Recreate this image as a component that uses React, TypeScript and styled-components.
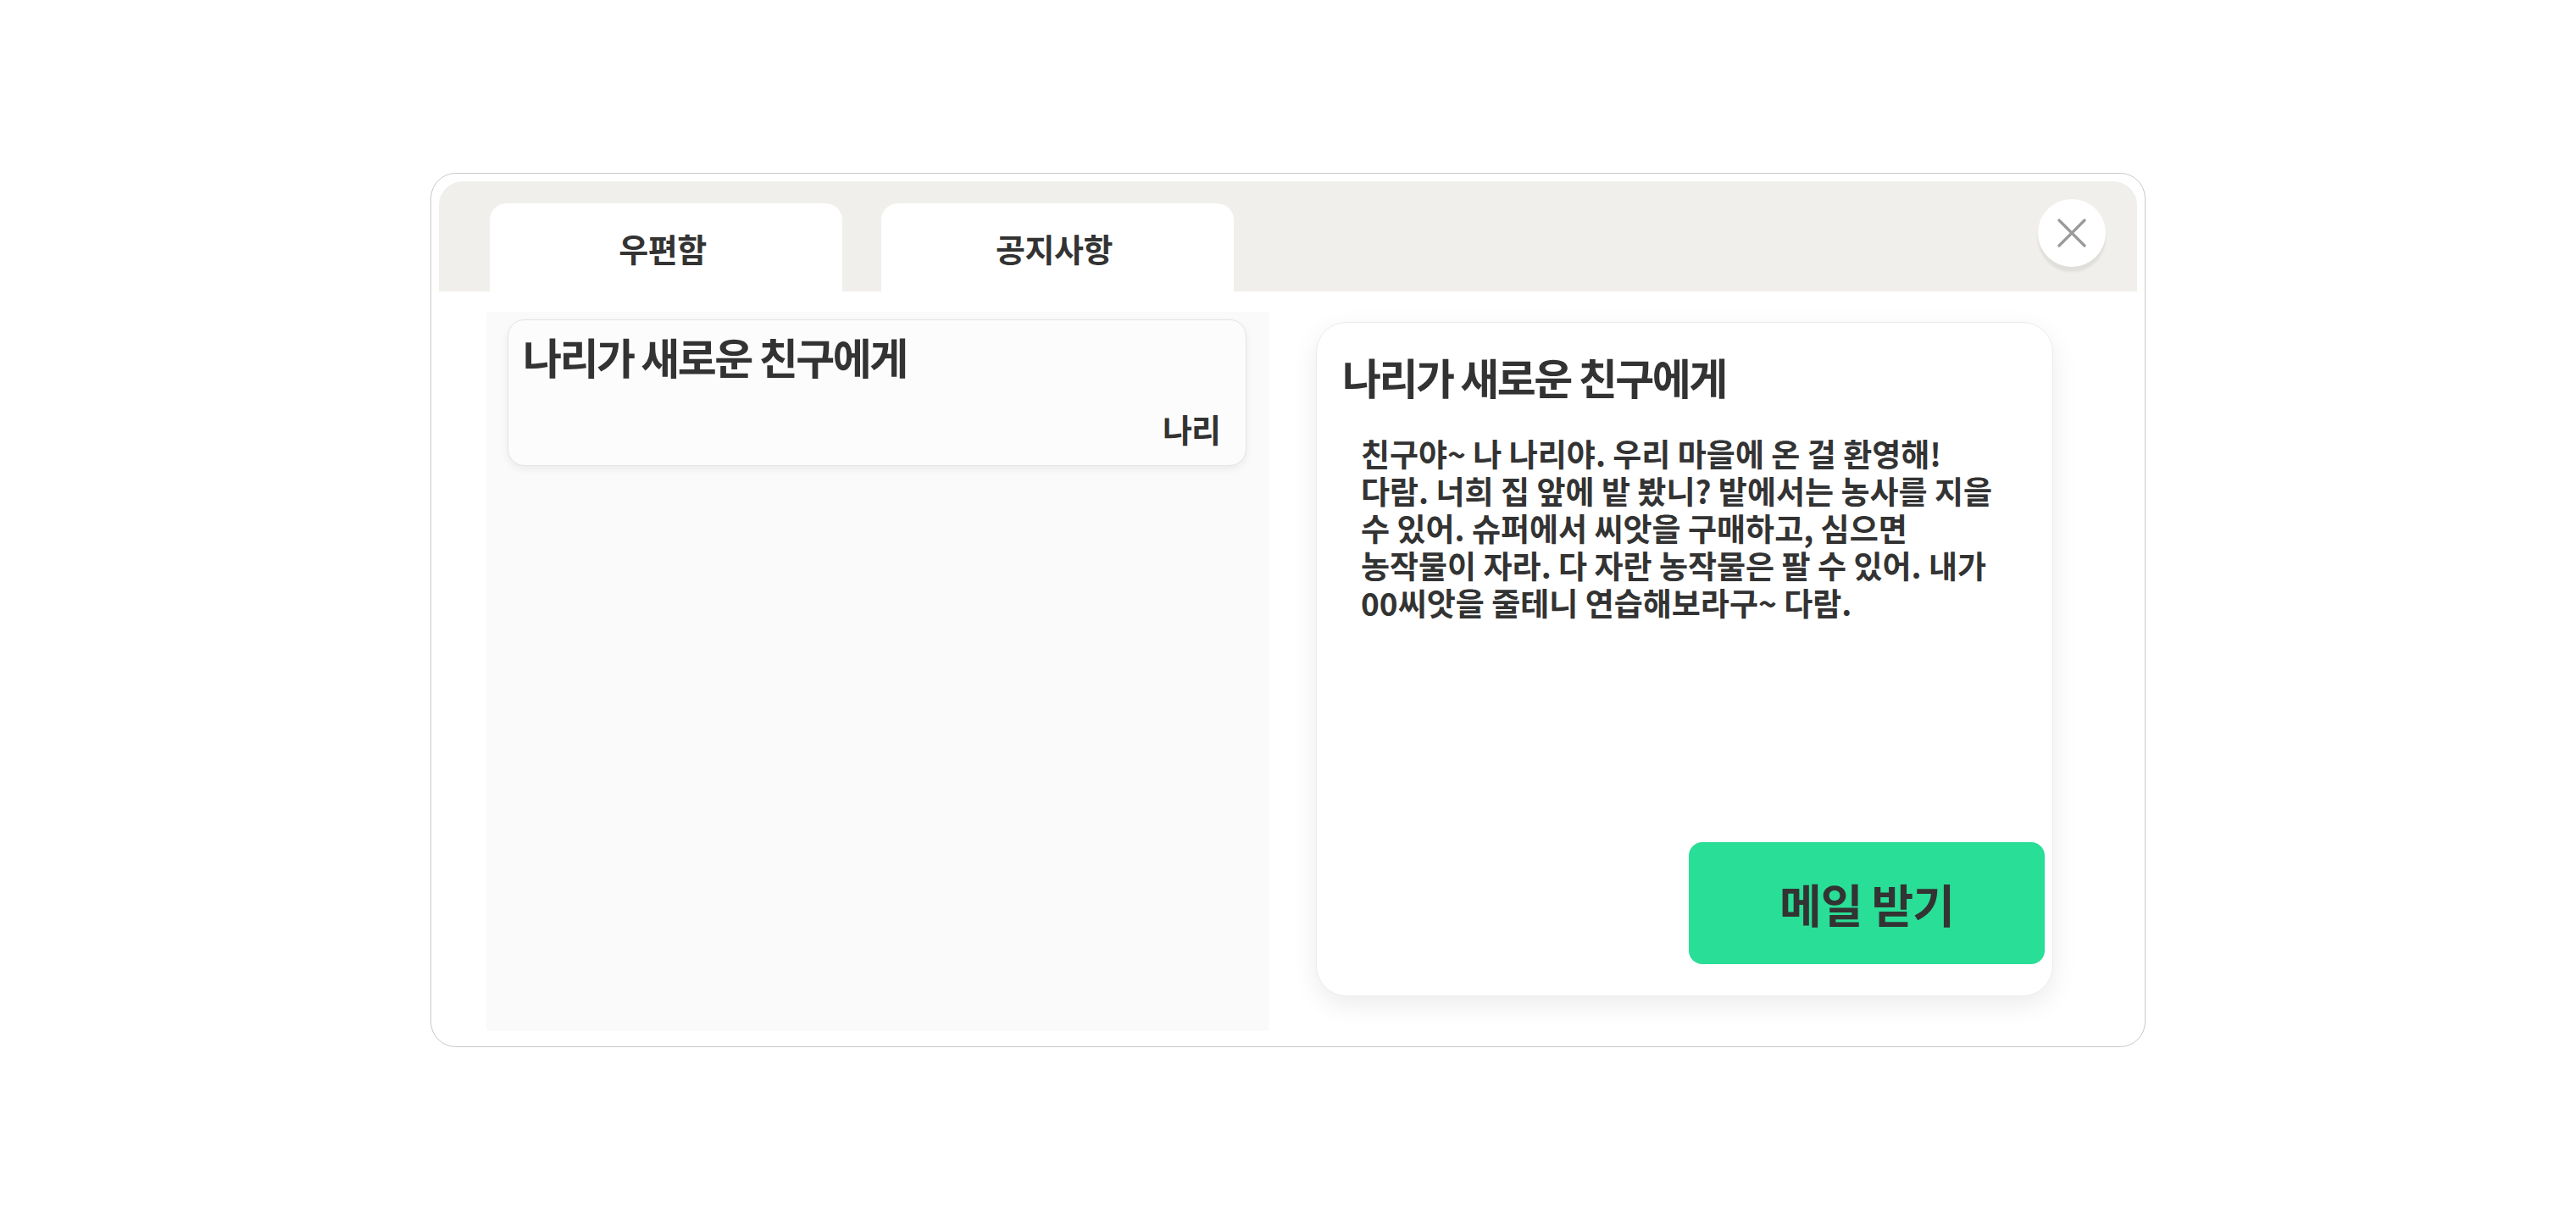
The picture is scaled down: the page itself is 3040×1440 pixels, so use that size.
import React from "react";
import styled, { createGlobalStyle } from "styled-components";

const GlobalStyle = createGlobalStyle`
  html, body {
    margin: 0;
    padding: 0;
    background: #ffffff;
  }
  body {
    font-family: "Noto Sans CJK KR", "Noto Sans", sans-serif;
    color: #333333;
  }
  * { box-sizing: border-box; }
`;

const Page = styled.div`
  width: 3040px;
  height: 1440px;
  display: flex;
  align-items: center;
  justify-content: center;
`;

const Modal = styled.div`
  width: 2024px;
  height: 1032px;
  border: 1px solid #c9c9c9;
  border-radius: 30px;
  padding: 9px;
  background: #ffffff;
  display: flex;
  flex-direction: column;
`;

const Header = styled.div`
  height: 130px;
  flex: none;
  background: #f0efeb;
  border-radius: 28px 28px 0 0;
  display: flex;
  align-items: flex-end;
  gap: 46px;
  padding: 0 37px 0 60px;
`;

const Tab = styled.button<{ $active?: boolean }>`
  width: 416px;
  height: 104px;
  border: none;
  border-radius: 20px 20px 0 0;
  background: #ffffff;
  display: flex;
  align-items: center;
  justify-content: center;
  font-family: "Noto Sans CJK KR", sans-serif;
  font-weight: 700;
  font-size: 38px;
  letter-spacing: -0.5px;
  color: #333333;
  padding: 0 8px 0 0;
  cursor: pointer;
`;

const CloseButton = styled.button`
  width: 80px;
  height: 80px;
  border-radius: 50%;
  border: none;
  background: #ffffff;
  margin-left: auto;
  align-self: flex-start;
  margin-top: 21px;
  box-shadow: 0 6px 3px rgba(0, 0, 0, 0.07);
  display: flex;
  align-items: center;
  justify-content: center;
  padding: 0;
  cursor: pointer;
`;

const Body = styled.div`
  flex: 1;
  display: flex;
  align-items: flex-start;
  padding: 24px 0 0 56px;
  gap: 55px;
`;

const List = styled.div`
  width: 924px;
  height: 849px;
  background: #fafafa;
  border-radius: 4px;
  padding: 9px 27px 0 25px;
  display: flex;
  flex-direction: column;
  gap: 16px;
`;

const MailCard = styled.div`
  height: 173px;
  background: #fcfcfc;
  border: 1px solid #e4e4e4;
  border-radius: 20px;
  box-shadow: 0 4px 10px rgba(0, 0, 0, 0.06);
  padding: 17px 30px 24px 17px;
  display: flex;
  flex-direction: column;
  justify-content: space-between;
`;

const CardTitle = styled.div`
  font-size: 50px;
  font-weight: 700;
  letter-spacing: -2.5px;
  line-height: 1;
  color: #333333;
`;

const CardAuthor = styled.div`
  align-self: flex-end;
  font-size: 38px;
  font-weight: 700;
  letter-spacing: -1px;
  line-height: 1;
  color: #333333;
`;

const Panel = styled.div`
  width: 870px;
  height: 796px;
  margin-top: 12px;
  background: #ffffff;
  border: 1px solid #ececec;
  border-radius: 36px;
  box-shadow: 0 10px 30px rgba(0, 0, 0, 0.08);
  padding: 38px 9px 37px 30px;
  display: flex;
  flex-direction: column;
`;

const PanelTitle = styled.div`
  font-size: 50px;
  font-weight: 700;
  letter-spacing: -2.5px;
  line-height: 1;
  color: #333333;
`;

const Message = styled.p`
  margin: 44px 0 0 22px;
  font-size: 37px;
  font-weight: 700;
  line-height: 44px;
  letter-spacing: 0;
  color: #333333;
  white-space: pre-line;
`;

const ReceiveButton = styled.button`
  margin-top: auto;
  align-self: flex-end;
  width: 420px;
  height: 144px;
  border: none;
  border-radius: 16px;
  background: #29de96;
  font-family: "Noto Sans CJK KR", sans-serif;
  font-weight: 700;
  font-size: 54px;
  letter-spacing: -1px;
  color: #333333;
  cursor: pointer;
  padding: 0;
`;

const CloseIcon = () => (
  <svg width="34" height="34" viewBox="0 0 34 34" fill="none">
    <path d="M2 2 L32 32 M32 2 L2 32" stroke="#9a9a9a" strokeWidth="3.2" strokeLinecap="round" />
  </svg>
);

const messageText =
  "친구야~ 나 나리야. 우리 마을에 온 걸 환영해!\n" +
  "다람. 너희 집 앞에 밭 봤니? 밭에서는 농사를 지을\n" +
  "수 있어. 슈퍼에서 씨앗을 구매하고, 심으면\n" +
  "농작물이 자라. 다 자란 농작물은 팔 수 있어. 내가\n" +
  "00씨앗을 줄테니 연습해보라구~ 다람.";

export default function App() {
  return (
    <>
      <GlobalStyle />
      <Page>
        <Modal>
          <Header>
            <Tab $active>우편함</Tab>
            <Tab>공지사항</Tab>
            <CloseButton aria-label="닫기">
              <CloseIcon />
            </CloseButton>
          </Header>
          <Body>
            <List>
              <MailCard>
                <CardTitle>나리가 새로운 친구에게</CardTitle>
                <CardAuthor>나리</CardAuthor>
              </MailCard>
            </List>
            <Panel>
              <PanelTitle>나리가 새로운 친구에게</PanelTitle>
              <Message>{messageText}</Message>
              <ReceiveButton>메일 받기</ReceiveButton>
            </Panel>
          </Body>
        </Modal>
      </Page>
    </>
  );
}
